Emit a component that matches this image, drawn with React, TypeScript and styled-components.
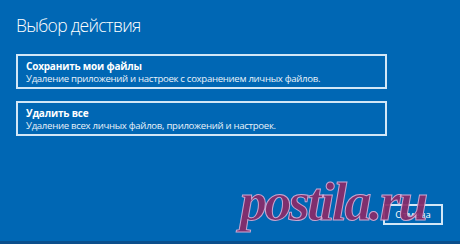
import React from "react";
import styled, { createGlobalStyle } from "styled-components";

const Global = createGlobalStyle`
  html, body { margin: 0; padding: 0; background: #0067b4; }
  #root { width: 460px; height: 244px; }
`;

const Screen = styled.div`
  position: relative;
  width: 460px;
  height: 244px;
  box-sizing: border-box;
  background: #0067b4;
  border-bottom: 3px solid #0b4f8c;
  padding: 15px 0 0 16px;
  display: flex;
  flex-direction: column;
  font-family: "Open Sans", "Noto Sans", sans-serif;
  color: #ffffff;
  overflow: hidden;
`;

const Title = styled.h1`
  margin: 0;
  font-size: 17.5px;
  line-height: 21px;
  font-weight: 300;
  letter-spacing: -0.7px;
`;

const Options = styled.div`
  margin-top: 18px;
  display: flex;
  flex-direction: column;
  gap: 12px;
  width: 371px;
`;

const Option = styled.div`
  box-sizing: border-box;
  height: 35px;
  border: 2px solid #d2e7f7;
  padding: 4px 8px 0 8px;
  display: flex;
  flex-direction: column;
`;

const OptionTitle = styled.div`
  font-size: 10px;
  line-height: 12px;
  font-weight: 700;
  letter-spacing: -0.2px;
`;

const OptionText = styled.div`
  font-size: 9.6px;
  line-height: 13px;
  font-weight: 400;
  color: #e8f1f9;
  letter-spacing: -0.3px;
`;

const Footer = styled.div`
  margin-top: auto;
  display: flex;
  justify-content: flex-end;
  padding: 0 17px 16px 0;
`;

const Button = styled.button`
  box-sizing: border-box;
  width: 60px;
  height: 21px;
  border: 2px solid #d2e7f7;
  background: transparent;
  color: #ffffff;
  font-family: "Open Sans", sans-serif;
  font-size: 9.5px;
  font-weight: 400;
  padding: 0;
`;

const Watermark = styled.div`
  position: absolute;
  left: 240px;
  top: 172px;
  font-family: "Liberation Serif", "DejaVu Serif", serif;
  font-style: italic;
  font-weight: 700;
  font-size: 54px;
  line-height: 60px;
  letter-spacing: -2.6px;
  color: rgba(138, 42, 104, 0.92);
  -webkit-text-stroke: 1px rgba(215, 175, 215, 0.9);
  pointer-events: none;
`;

export default function App() {
  return (
    <>
      <Global />
      <Screen>
        <Title>Выбор действия</Title>
        <Options>
          <Option>
            <OptionTitle>Сохранить мои файлы</OptionTitle>
            <OptionText>Удаление приложений и настроек с сохранением личных файлов.</OptionText>
          </Option>
          <Option>
            <OptionTitle>Удалить все</OptionTitle>
            <OptionText>Удаление всех личных файлов, приложений и настроек.</OptionText>
          </Option>
        </Options>
        <Footer>
          <Button>Отмена</Button>
        </Footer>
        <Watermark>postila.ru</Watermark>
      </Screen>
    </>
  );
}
